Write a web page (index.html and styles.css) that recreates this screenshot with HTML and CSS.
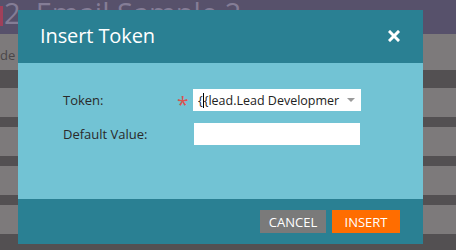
FILE: index.html
```html
<!DOCTYPE html>
<html>
<head>
<meta charset="utf-8">
<link rel="stylesheet" href="styles.css">
</head>
<body>
<div class="page">
  <div class="topbar"><span class="red-mark"></span><span class="page-title">2. Email Sample 2</span></div>
  <div class="row row-first"><span class="row-text">de</span></div>
  <div class="gap gap-first"></div>
  <div class="row"></div>
  <div class="gap"></div>
  <div class="row"></div>
  <div class="gap"></div>
  <div class="row"></div>
  <div class="gap"></div>
  <div class="row"></div>
  <div class="gap gap-last"></div>
</div>

<div class="modal">
  <div class="modal-header">
    <h1 class="modal-title">Insert Token</h1>
    <svg class="close" width="12" height="12" viewBox="0 0 12 12">
      <path d="M2 2 L10 10 M10 2 L2 10" stroke="#fff" stroke-width="3" stroke-linecap="square"/>
    </svg>
  </div>
  <div class="modal-body">
    <div class="field">
      <span class="label">Token:</span>
      <span class="req">*</span>
      <div class="select"><span class="select-text">{<span class="caret"></span>{lead.Lead Developmer</span><span class="arrow"></span></div>
    </div>
    <div class="field">
      <span class="label">Default Value:</span>
      <span class="req"></span>
      <div class="input"></div>
    </div>
  </div>
  <div class="modal-footer">
    <button class="btn btn-cancel">CANCEL</button>
    <button class="btn btn-insert">INSERT</button>
  </div>
</div>
</body>
</html>
```

FILE: styles.css
```css
* { box-sizing: border-box; }
html, body { margin: 0; padding: 0; }
body {
  width: 456px;
  height: 250px;
  overflow: hidden;
  font-family: "Open Sans", "DejaVu Sans", sans-serif;
  background: #535052;
  position: relative;
}
.page { display: flex; flex-direction: column; }
.topbar {
  height: 34px;
  background: #57516b;
  display: flex;
  align-items: flex-start;
  overflow: hidden;
}
.red-mark { width: 3px; height: 20px; margin-top: 6px; background: #a0405a; }
.page-title {
  font-size: 29px;
  line-height: 34px;
  color: #847d96;
  margin-top: -4px;
  margin-left: 1px;
  white-space: nowrap;
}
.row { height: 29px; background: #7d7a7b; }
.row-first { height: 36px; }
.row-text { font-size: 13px; color: #4a4749; line-height: 36px; position: relative; top: 3px; }
.gap { height: 10px; background: #535052; }
.gap-first { height: 18px; }
.gap-last { height: 18px; }

.modal {
  position: absolute;
  left: 18px;
  top: 10px;
  width: 405px;
  height: 234px;
  display: flex;
  flex-direction: column;
}
.modal-header {
  height: 53px;
  background: #2a8093;
  display: flex;
  align-items: center;
  justify-content: space-between;
  padding: 0 23px 0 22px;
}
.modal-title {
  margin: 0;
  font-weight: normal;
  font-size: 20px;
  letter-spacing: -0.1px;
  color: #fff;
  line-height: 30px;
  position: relative;
  top: -1px;
}
.close { display: block; position: relative; top: -1px; }
.modal-body {
  height: 136px;
  background: #72c3d4;
  padding: 26px 0 0 45px;
  display: flex;
  flex-direction: column;
  gap: 12px;
}
.field { display: flex; align-items: center; height: 22px; }
.label { width: 114px; font-size: 13px; color: #2a2a2a; }
.req { width: 16px; color: #d9534f; font-size: 21px; line-height: 22px; padding-top: 7px; }
.select {
  width: 168px;
  height: 22px;
  background: #fff;
  display: flex;
  align-items: center;
  padding-left: 5px;
  position: relative;
}
.select-text {
  font-size: 12.5px;
  color: #222;
  white-space: nowrap;
  overflow: hidden;
  width: 146px;
}
.caret { display: inline-block; width: 1px; height: 15px; background: #000; vertical-align: -3px; }
.arrow {
  position: absolute;
  right: 6px;
  top: 9px;
  width: 0; height: 0;
  border-left: 4px solid transparent;
  border-right: 4px solid transparent;
  border-top: 4px solid #9a9a9a;
}
.input { width: 166px; height: 22px; background: #fff; margin-left: 1px; }
.modal-footer {
  height: 45px;
  background: #2a8093;
  display: flex;
  justify-content: flex-end;
  align-items: flex-start;
  gap: 6px;
  padding: 11px 23px 0 0;
}
.btn {
  border: 0;
  height: 23px;
  font-family: "Open Sans", "DejaVu Sans", sans-serif;
  font-size: 13px;
  color: #fff;
  padding: 0;
  text-align: center;
}
.btn-cancel { width: 66px; background: #7a7a7a; }
.btn-insert { width: 68px; background: #ff6d00; }
```
